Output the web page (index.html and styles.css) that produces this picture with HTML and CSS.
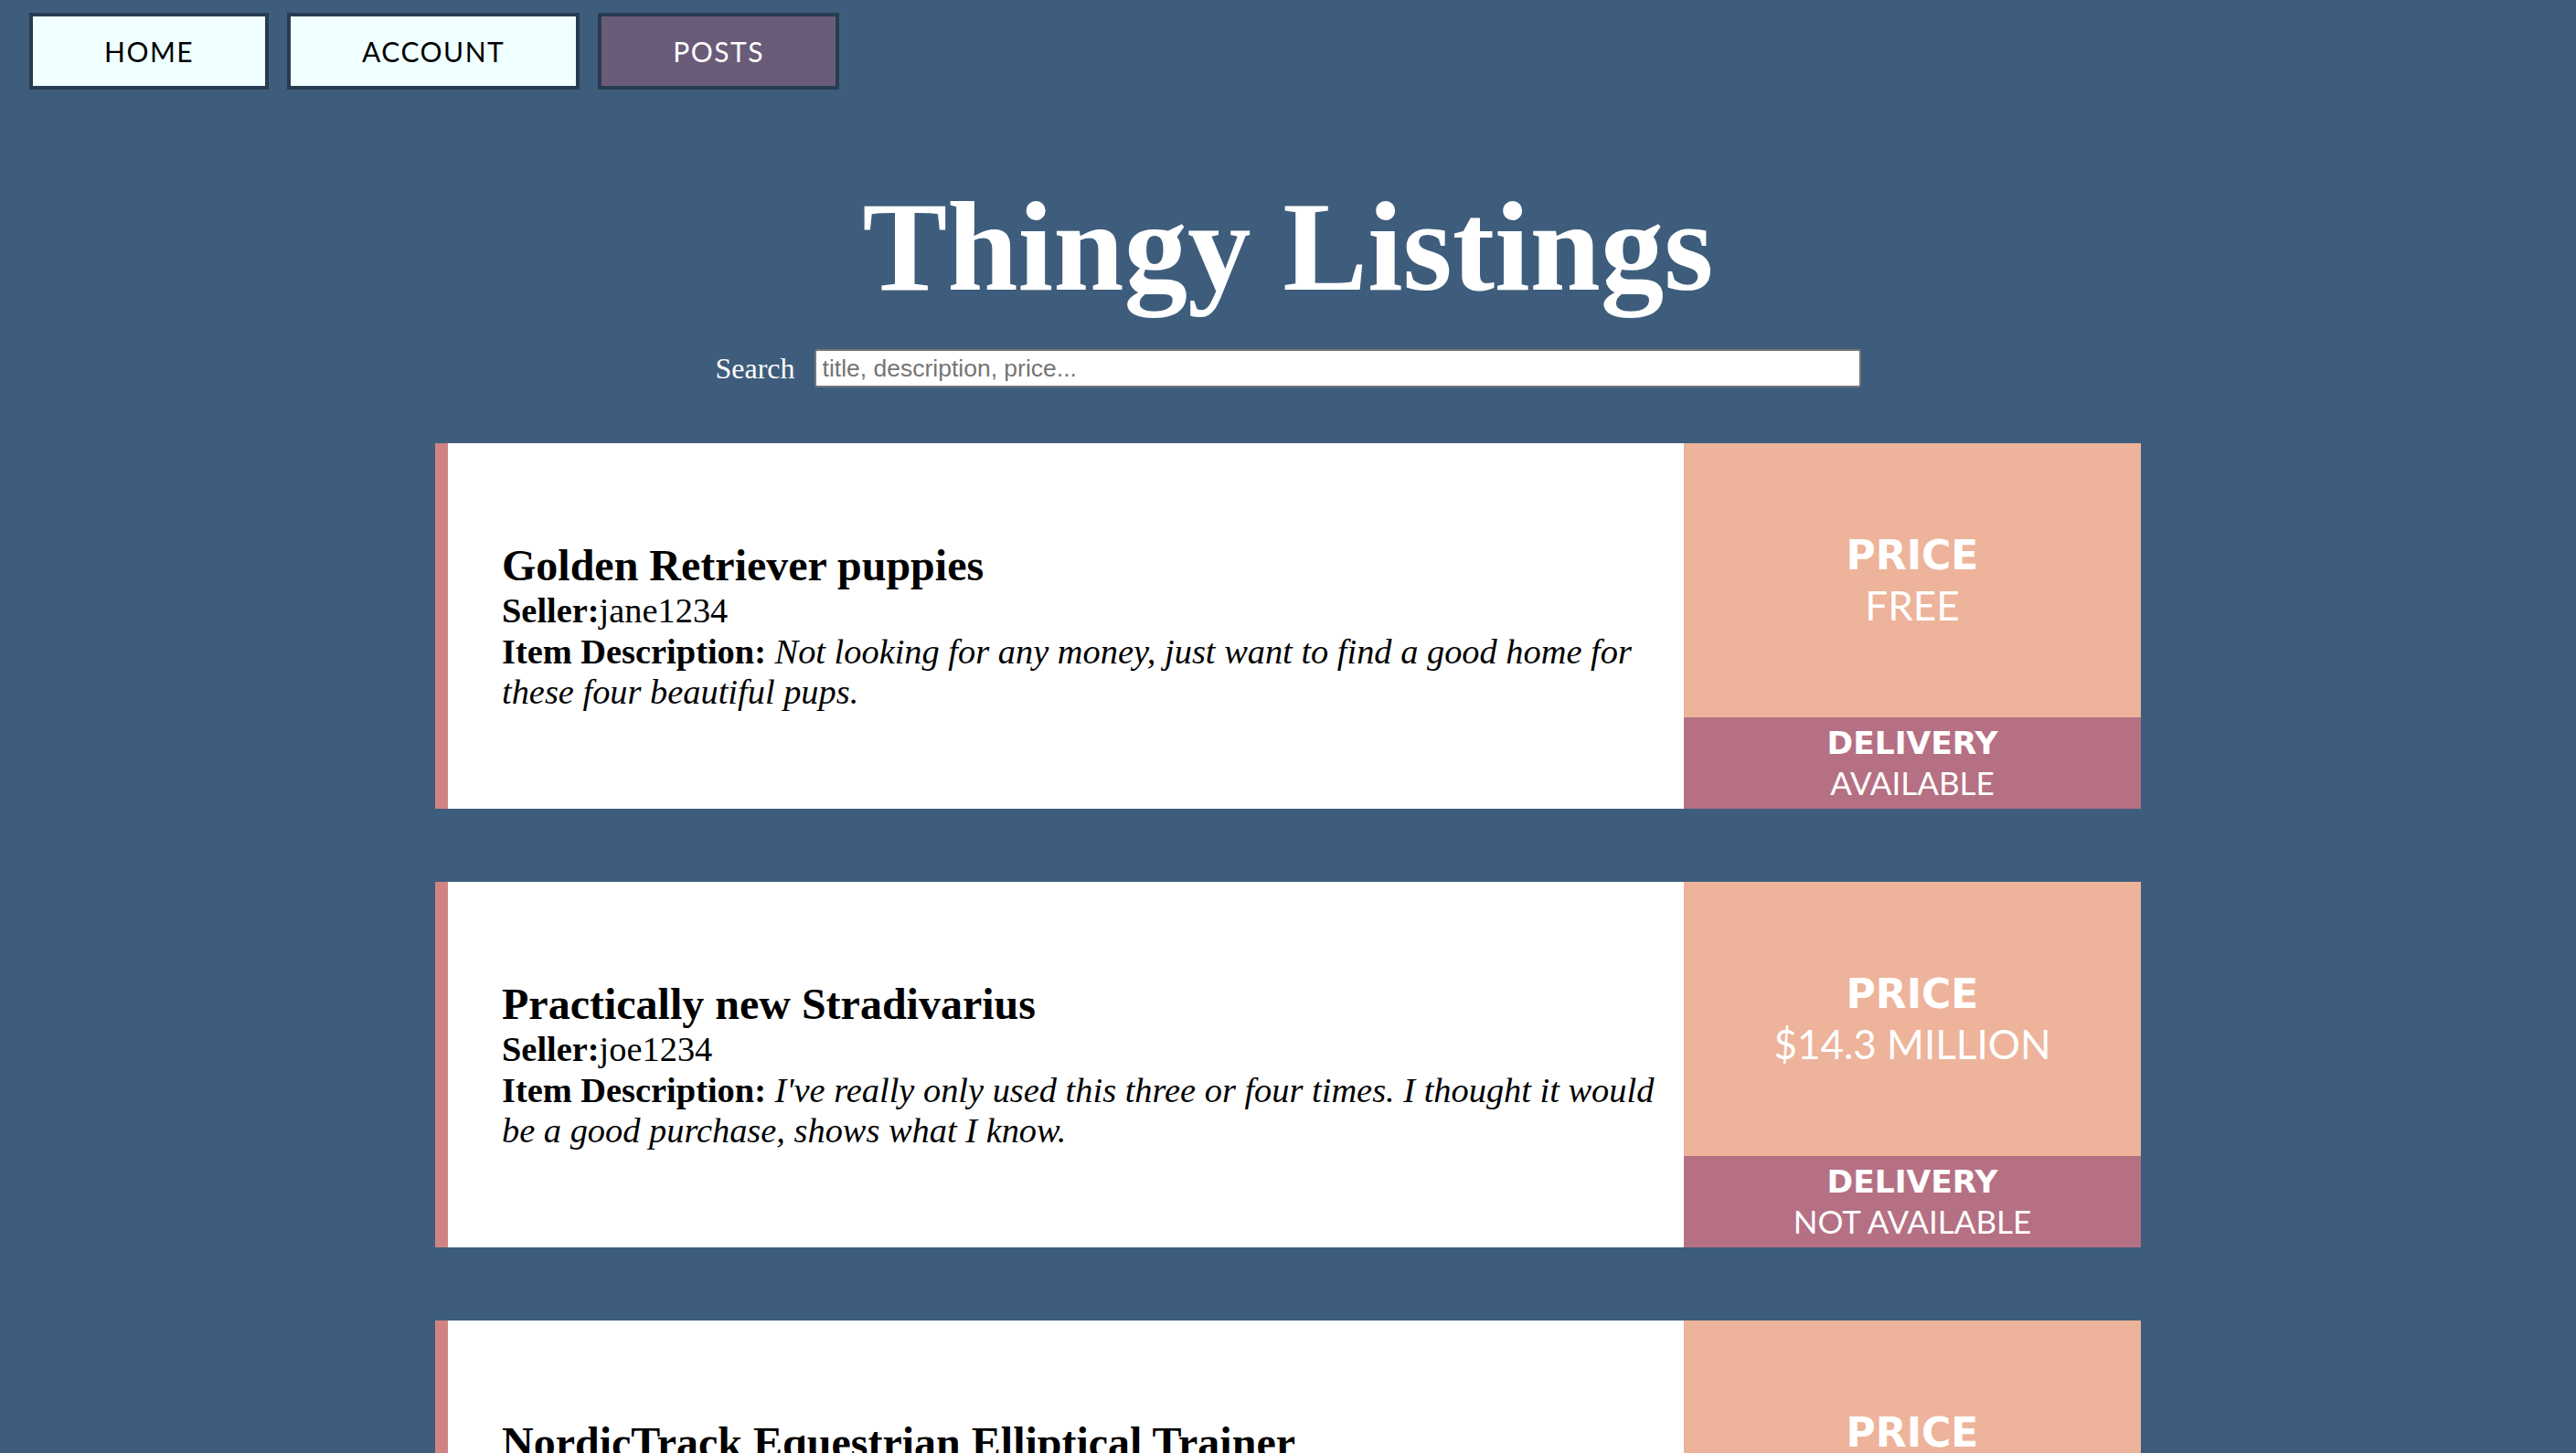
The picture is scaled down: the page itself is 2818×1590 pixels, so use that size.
FILE: index.html
```html
<!DOCTYPE html>
<html lang="en">
<head>
<meta charset="utf-8">
<title>Thingy Listings</title>
<link rel="stylesheet" href="styles.css">
</head>
<body>
  <nav class="nav">
    <a class="nav-btn" href="#">HOME</a>
    <a class="nav-btn" href="#">ACCOUNT</a>
    <a class="nav-btn nav-btn-active" href="#">POSTS</a>
  </nav>

  <header class="header">
    <h1 class="title">Thingy Listings</h1>
    <form class="search">
      <label class="search-label" for="q">Search</label>
      <input class="search-input" id="q" type="text" placeholder="title, description, price...">
    </form>
  </header>

  <main class="listings">
    <article class="card">
      <div class="card-body">
        <h2 class="card-title">Golden Retriever puppies</h2>
        <p class="card-line"><b>Seller:</b>jane1234</p>
        <p class="card-line"><b>Item Description:</b> <i>Not looking for any money, just want to find a good home for these four beautiful pups.</i></p>
      </div>
      <aside class="card-side">
        <div class="price">
          <div class="label-big">PRICE</div>
          <div class="value-big">FREE</div>
        </div>
        <div class="delivery">
          <div class="label-small">DELIVERY</div>
          <div class="value-small">AVAILABLE</div>
        </div>
      </aside>
    </article>

    <article class="card">
      <div class="card-body">
        <h2 class="card-title">Practically new Stradivarius</h2>
        <p class="card-line"><b>Seller:</b>joe1234</p>
        <p class="card-line"><b>Item Description:</b> <i>I've really only used this three or four times. I thought it would be a good purchase, shows what I know.</i></p>
      </div>
      <aside class="card-side">
        <div class="price">
          <div class="label-big">PRICE</div>
          <div class="value-big">$14.3 MILLION</div>
        </div>
        <div class="delivery">
          <div class="label-small">DELIVERY</div>
          <div class="value-small">NOT AVAILABLE</div>
        </div>
      </aside>
    </article>

    <article class="card">
      <div class="card-body">
        <h2 class="card-title">NordicTrack Equestrian Elliptical Trainer</h2>
        <p class="card-line"><b>Seller:</b>sam1234</p>
        <p class="card-line"><b>Item Description:</b> <i>Barely used, still works great. Pick up only, it is very heavy and I am not carrying it.</i></p>
      </div>
      <aside class="card-side">
        <div class="price">
          <div class="label-big">PRICE</div>
          <div class="value-big">$150</div>
        </div>
        <div class="delivery">
          <div class="label-small">DELIVERY</div>
          <div class="value-small">NOT AVAILABLE</div>
        </div>
      </aside>
    </article>
  </main>
</body>
</html>
```

FILE: styles.css
```css
html, body {
  margin: 0;
  padding: 0;
}

body {
  background: #3e5d7c;
  font-family: "Liberation Serif", "Times New Roman", serif;
  color: #000;
}

/* Navigation */
.nav {
  display: flex;
  gap: 20px;
  padding: 14px 0 0 32px;
}

.nav-btn {
  display: block;
  padding: 20px 78px;
  border: 4px solid #273c52;
  background: #f0ffff;
  color: #000;
  font-family: Lato, "Open Sans", sans-serif;
  font-size: 30px;
  line-height: 36px;
  letter-spacing: 1.5px;
  text-decoration: none;
}

.nav-btn-active {
  background: #6a5b79;
  color: #fff;
}

/* Header */
.header {
  display: flex;
  flex-direction: column;
  align-items: center;
}

.title {
  margin: 91px 0 0;
  font-family: "Liberation Serif", "Times New Roman", serif;
  font-weight: bold;
  font-size: 139px;
  line-height: 162px;
  color: #fff;
}

.search {
  display: flex;
  align-items: center;
  gap: 21px;
  margin: 31px 0 0;
}

.search-label {
  font-family: "Liberation Serif", "Times New Roman", serif;
  font-size: 32px;
  color: #fff;
}

.search-input {
  box-sizing: border-box;
  width: 1145px;
  height: 42px;
  padding: 0 7px;
  border: 2px solid #767676;
  border-radius: 3px;
  background: #fff;
  font-family: "Liberation Sans", Arial, sans-serif;
  font-size: 26.5px;
  color: #000;
}

.search-input::placeholder {
  color: #757575;
}

/* Listings */
.listings {
  display: flex;
  flex-direction: column;
  align-items: center;
  gap: 80px;
  margin-top: 61px;
  padding-bottom: 80px;
}

.card {
  display: flex;
  width: 1866px;
  height: 400px;
  background: #fff;
  border-left: 14px solid #d08482;
  box-sizing: border-box;
}

.card-body {
  flex: 1;
  display: flex;
  flex-direction: column;
  justify-content: center;
  padding: 0 20px 0 59px;
}

.card-title {
  margin: 0;
  font-size: 48px;
  font-weight: bold;
  line-height: 1.15;
}

.card-line {
  margin: 0;
  font-size: 38.4px;
  line-height: 1.15;
}

.card-side {
  width: 500px;
  display: flex;
  flex-direction: column;
  color: #fff;
  text-align: center;
}

.price {
  flex: 1;
  background: #edb39b;
  display: flex;
  flex-direction: column;
  justify-content: center;
}

.delivery {
  height: 100px;
  background: #b57083;
  display: flex;
  flex-direction: column;
  justify-content: center;
}

.label-big {
  font-family: "DejaVu Sans", sans-serif;
  font-weight: bold;
  font-size: 44px;
  line-height: 55px;
}

.value-big {
  font-family: Lato, sans-serif;
  font-size: 44px;
  line-height: 55px;
}

.label-small {
  font-family: "DejaVu Sans", sans-serif;
  font-weight: bold;
  font-size: 34.5px;
  line-height: 43px;
}

.value-small {
  font-family: Lato, sans-serif;
  font-size: 35px;
  line-height: 43px;
}
```
